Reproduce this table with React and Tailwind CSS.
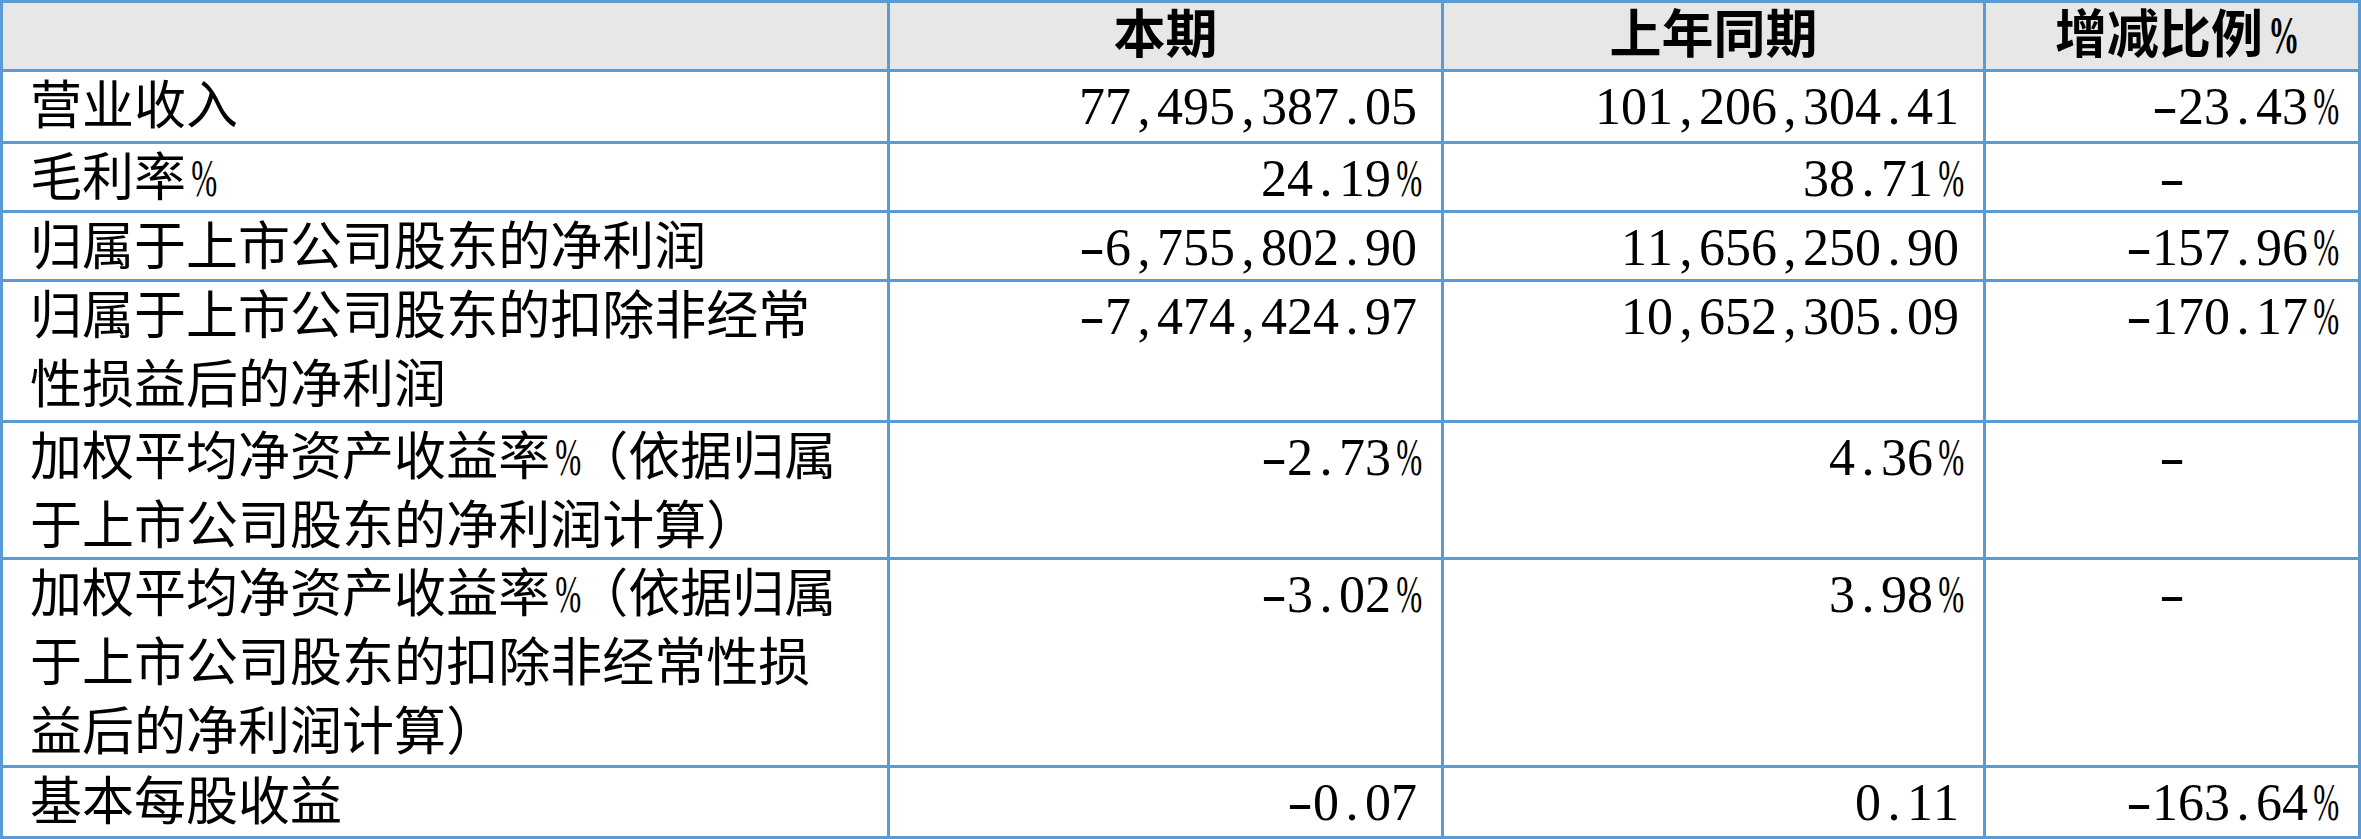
const rows = [
  { label: ['营业收入'], cur: '77,495,387.05', prev: '101,206,304.41', chg: '-23.43%' },
  { label: ['毛利率%'], cur: '24.19%', prev: '38.71%', chg: '-' },
  { label: ['归属于上市公司股东的净利润'], cur: '-6,755,802.90', prev: '11,656,250.90', chg: '-157.96%' },
  {
    label: ['归属于上市公司股东的扣除非经常', '性损益后的净利润'],
    cur: '-7,474,424.97',
    prev: '10,652,305.09',
    chg: '-170.17%',
  },
  {
    label: ['加权平均净资产收益率%（依据归属', '于上市公司股东的净利润计算）'],
    cur: '-2.73%',
    prev: '4.36%',
    chg: '-',
  },
  {
    label: ['加权平均净资产收益率%（依据归属', '于上市公司股东的扣除非经常性损', '益后的净利润计算）'],
    cur: '-3.02%',
    prev: '3.98%',
    chg: '-',
  },
  { label: ['基本每股收益'], cur: '-0.07', prev: '0.11', chg: '-163.64%' },
];

// half-width boxes for latin chars, like the song-style font in the source
function Txt({ s }) {
  return [...s].map((c, i) => {
    if (!/[\x20-\x7e]/.test(c)) return c;
    let cls = 'inline-block w-[26px] text-center';
    if (c === '%') cls += ' scale-x-[0.6]';
    if (c === '-') cls += ' scale-x-[1.5]';
    return (
      <span key={i} className={cls}>
        {c}
      </span>
    );
  });
}

function Num({ s }) {
  const center = s === '-';
  return (
    <div className={`bg-white whitespace-nowrap ${center ? 'text-center' : 'text-right pr-[24px]'}`}>
      <Txt s={s} />
    </div>
  );
}

export default function App() {
  return (
    <div
      className="w-[2361px] h-[839px] bg-white text-black text-[52px] leading-[69px]"
      style={{ fontFamily: '"Liberation Serif", "Noto Sans CJK SC", serif' }}
    >
      <div className="grid grid-cols-[884px_551px_539px_372px] grid-rows-[66px_69px_66px_66px_138px_134px_205px_68px] gap-[3px] p-[3px] bg-[#5b9bd5] overflow-hidden h-[839px]">
        <div className="bg-[#e7e7e7]" />
        {['本期', '上年同期', '增减比例%'].map((h) => (
          <div key={h} className="bg-[#e7e7e7] text-center font-bold leading-[66px] whitespace-nowrap">
            <Txt s={h} />
          </div>
        ))}
        {rows.map((r, i) => (
          <div key={i} className="contents">
            <div className="bg-white pl-[27px] whitespace-nowrap">
              {r.label.map((l, j) => (
                <div key={j} className="h-[69px]">
                  <Txt s={l} />
                </div>
              ))}
            </div>
            <Num s={r.cur} />
            <Num s={r.prev} />
            <Num s={r.chg} />
          </div>
        ))}
      </div>
    </div>
  );
}
